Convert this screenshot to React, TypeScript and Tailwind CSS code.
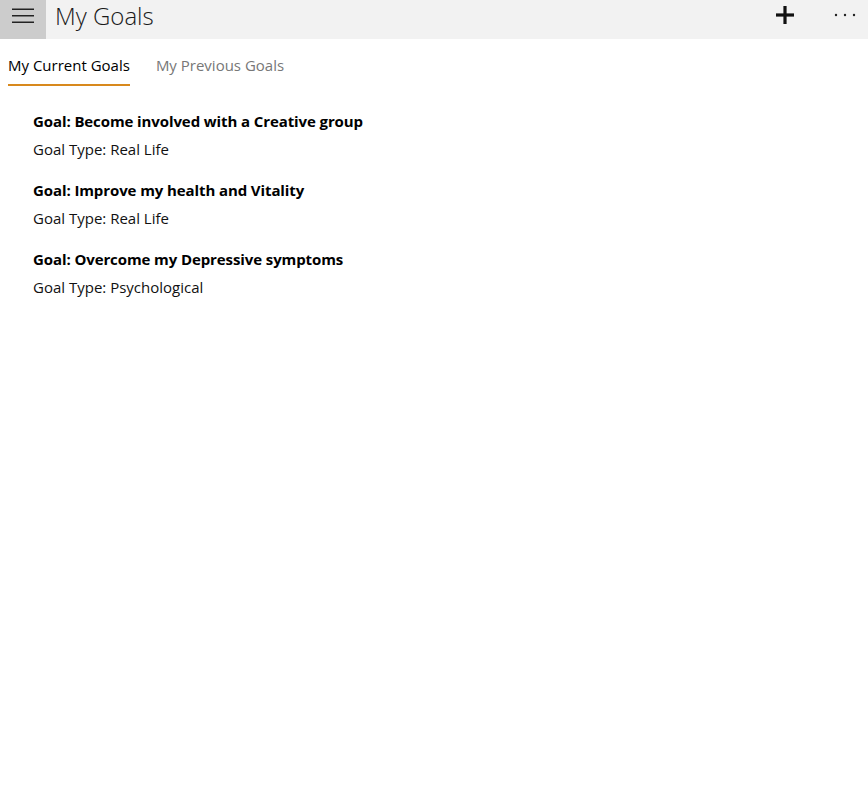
import React from "react";

interface Goal {
    title: string;
    type: string;
}

const goals: Goal[] = [
    {title: "Become involved with a Creative group", type: "Real Life"},
    {title: "Improve my health and Vitality", type: "Real Life"},
    {title: "Overcome my Depressive symptoms", type: "Psychological"},
];

const App: React.FC = () => {
    return (
        <div className="min-h-[787px] w-full bg-white text-black" style={{fontFamily: "'Segoe UI', 'Open Sans', 'Noto Sans', sans-serif"}}>
            {/* top bar */}
            <div className="flex h-[39px] items-center bg-[#f2f2f2]">
                <button className="flex h-[39px] w-[46px] items-start justify-center bg-[#cccccc] pt-[8px]">
                    <svg width="22" height="16" viewBox="0 0 22 16">
                        <rect x="0" y="0.5" width="22" height="1.5" fill="#222"/>
                        <rect x="0" y="7" width="22" height="1.5" fill="#222"/>
                        <rect x="0" y="13.5" width="22" height="1.5" fill="#222"/>
                    </svg>
                </button>
                <h1 className="ml-[9px] -mt-[7px] text-[24px] font-light leading-none text-[#1a1a1a]">My Goals</h1>
                <div className="ml-auto flex h-full items-start">
                    <button className="mr-[14px] flex h-[30px] w-[46px] items-center justify-center">
                        <svg width="20" height="20" viewBox="0 0 20 20">
                            <rect x="8.4" y="1" width="3.2" height="18" fill="#111"/>
                            <rect x="1" y="8.4" width="18" height="3.2" fill="#111"/>
                        </svg>
                    </button>
                    <button className="flex h-[30px] w-[46px] items-center justify-center">
                        <svg width="22" height="4" viewBox="0 0 22 4">
                            <circle cx="2" cy="2" r="1.2" fill="#222"/>
                            <circle cx="11" cy="2" r="1.2" fill="#222"/>
                            <circle cx="20" cy="2" r="1.2" fill="#222"/>
                        </svg>
                    </button>
                </div>
            </div>

            {/* tabs */}
            <div className="flex gap-[26px] px-[8px] pt-[16px]">
                <div className="flex flex-col">
                    <span className="text-[15px] leading-[20px] text-black">My Current Goals</span>
                    <span className="mt-[9px] h-[2px] w-full bg-[#d8891d]"/>
                </div>
                <span className="text-[15px] leading-[20px] text-[#777777]">My Previous Goals</span>
            </div>

            {/* goal list */}
            <div className="flex flex-col gap-[21px] px-[33px] pt-[25px]">
                {goals.map((goal) => (
                    <div key={goal.title} className="flex flex-col gap-[8px]">
                        <p className="text-[15px] font-bold leading-[20px] tracking-[-0.1px]">Goal: {goal.title}</p>
                        <p className="text-[15px] leading-[20px] text-[#111]">Goal Type: {goal.type}</p>
                    </div>
                ))}
            </div>
        </div>
    );
};

export default App;
